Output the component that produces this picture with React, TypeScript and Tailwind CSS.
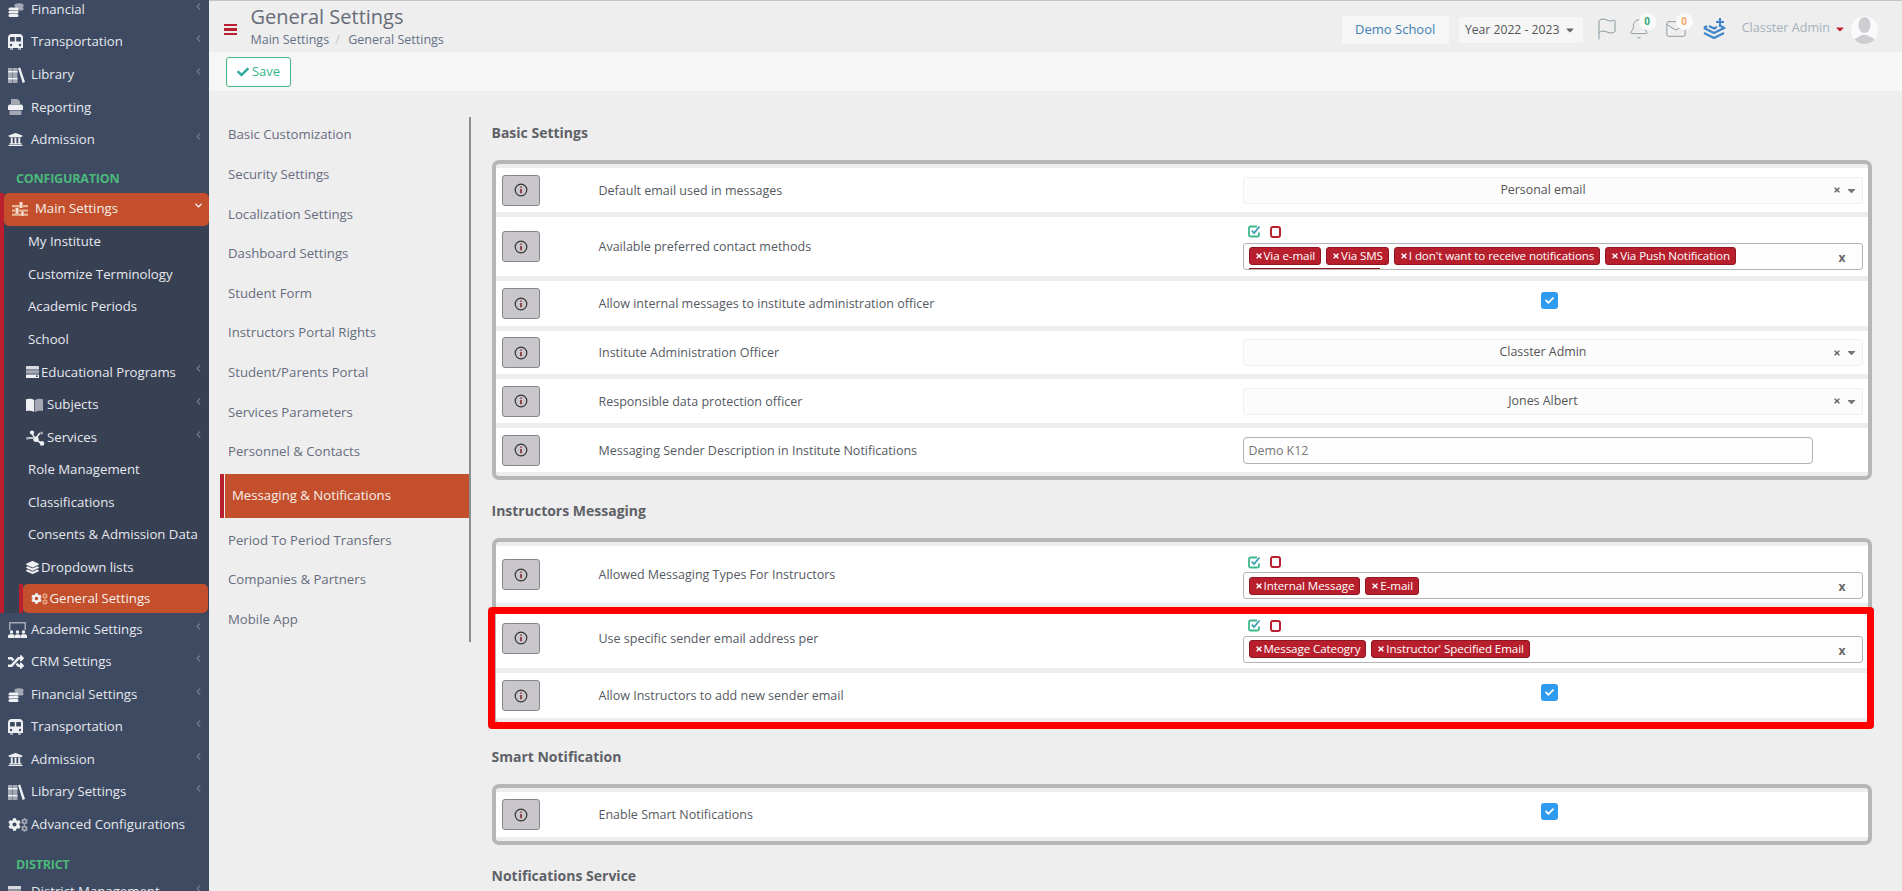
import React from "react";
import { ChevronLeft, ChevronDown, Flag, Bell, Mail } from "lucide-react";
import { FaCog, FaUniversity, FaLayerGroup, FaRandom, FaCaretDown, FaCheck, FaTimes } from "react-icons/fa";

const W = "#eef0f3";
const G = "#a3a8b4";

const Coins = () => (
  <svg width="16" height="14" viewBox="0 0 16 14">
    <ellipse cx="11" cy="2.4" rx="4.6" ry="2.2" fill={G} />
    <rect x="7" y="4" width="8.6" height="3.4" rx="1.6" fill={G} />
    <rect x="0.5" y="4.5" width="10" height="3" rx="1.5" fill={W} />
    <rect x="0.5" y="8" width="10" height="2.6" rx="1.3" fill={W} />
    <rect x="0.5" y="11" width="10" height="3" rx="1.5" fill={W} />
  </svg>
);
const Bus = () => (
  <svg width="15" height="16" viewBox="0 0 15 16">
    <rect x="2" y="13" width="3" height="3" fill={G} />
    <rect x="10" y="13" width="3" height="3" fill={G} />
    <path d="M4 0h7a4 4 0 0 1 4 4v10H0V4a4 4 0 0 1 4-4z" fill={W} />
    <rect x="2" y="3" width="4.8" height="4.4" rx="0.6" fill="#3d4a62" />
    <rect x="8.2" y="3" width="4.8" height="4.4" rx="0.6" fill="#3d4a62" />
    <circle cx="3" cy="11" r="1.2" fill="#3d4a62" />
    <circle cx="12" cy="11" r="1.2" fill="#3d4a62" />
  </svg>
);
const Books = () => (
  <svg width="17" height="16" viewBox="0 0 17 16">
    <rect x="0" y="1" width="4.5" height="15" fill={G} />
    <rect x="5" y="1" width="4.5" height="15" fill={G} />
    <rect x="0" y="4" width="9.5" height="1.4" fill={W} />
    <rect x="0" y="11" width="9.5" height="1.4" fill={W} />
    <path d="M10 1.2L12.2 0.4 17 15 14.6 16z" fill={W} />
  </svg>
);
const Printer = () => (
  <svg width="15" height="16" viewBox="0 0 15 16">
    <path d="M3 0h6.5L12 2.4V5H3z" fill={G} />
    <path d="M2 5.5h11a2 2 0 0 1 2 2V11H0V7.5a2 2 0 0 1 2-2z" fill={W} />
    <rect x="1.5" y="11.6" width="12" height="4.4" rx="1" fill={G} />
  </svg>
);
const Sliders = () => (
  <svg width="16" height="14" viewBox="0 0 16 14">
    <rect x="0" y="3" width="7" height="2.2" fill="#e7b695" />
    <rect x="11" y="3" width="5" height="2.2" fill="#e7b695" />
    <rect x="7.5" y="0" width="3" height="6" fill="#f5dfcf" />
    <rect x="0" y="7.5" width="3" height="2.2" fill="#e7b695" />
    <rect x="7" y="7.5" width="9" height="2.2" fill="#e7b695" />
    <rect x="3.5" y="5.8" width="3" height="6" fill="#f5dfcf" />
    <rect x="0" y="11.6" width="9" height="2.2" fill="#e7b695" />
    <rect x="12" y="11.6" width="4" height="2.2" fill="#e7b695" />
    <rect x="9.2" y="9.6" width="2.6" height="4.4" fill="#f5dfcf" />
  </svg>
);
const Server = () => (
  <svg width="13" height="12" viewBox="0 0 13 12">
    <rect x="0" y="0" width="13" height="3.4" rx="0.6" fill="#d8dae0" />
    <rect x="0" y="4.2" width="13" height="3.4" fill={G} />
    <rect x="0" y="8.4" width="13" height="3.6" rx="0.6" fill={W} />
    <rect x="10" y="9.4" width="1.6" height="1.6" fill="#384054" />
  </svg>
);
const Book = () => (
  <svg width="17" height="14" viewBox="0 0 17 14">
    <path d="M0 1.2C3 .3 6 .6 8.2 2v12C6 12.8 3 12.4 0 13z" fill={W} />
    <path d="M9 2c2.2-1.4 5-1.7 8-.8V13c-3-.6-5.8-.2-8 1z" fill={G} />
  </svg>
);
const Nodes = () => (
  <svg width="19" height="16" viewBox="0 0 19 16" fill="none">
    <path d="M2 8h5M6 3l3 6 6 4M9 9l5-6" stroke={W} strokeWidth="1.6" />
    <circle cx="6" cy="2.6" r="2.1" fill={W} />
    <circle cx="1.6" cy="8.2" r="1.5" fill={G} />
    <circle cx="10" cy="9.2" r="2.7" fill={W} />
    <circle cx="16" cy="13.4" r="2.3" fill={W} />
    <circle cx="15.6" cy="3" r="1.5" fill={G} />
  </svg>
);
const Academic = () => (
  <svg width="19" height="16" viewBox="0 0 19 16">
    <path d="M1 0h17v8h-1.5V1.5h-14V8H1z" fill={G} />
    <circle cx="3.5" cy="10" r="1.7" fill={W} />
    <circle cx="9.5" cy="10" r="1.7" fill={W} />
    <circle cx="15.5" cy="10" r="1.7" fill={W} />
    <path d="M0 16v-2c0-1 1-1.8 2-1.8h3c1 0 1.5.8 1.5 1.8v2zM6.8 16v-2c0-1 1-1.8 2-1.8h1.5c1 0 2 .8 2 1.8v2zM12.6 16v-2c0-1 .8-1.8 1.8-1.8H17c1 0 2 .8 2 1.8v2z" fill={W} />
  </svg>
);
const Cogs = ({ big = 13, small = 6, c = G }: { big?: number; small?: number; c?: string }) => (
  <span className="flex items-center">
    <FaCog size={big} color={W} />
    <span className="flex flex-col">
      <FaCog size={small} color={c} />
      <FaCog size={small} color={c} />
    </span>
  </span>
);
const Stack = ({ size = 13 }: { size?: number }) => <FaLayerGroup size={size} color={W} />;

const Chev = () => <ChevronLeft size={11} strokeWidth={2.5} className="ml-auto mr-[5px] mb-[7px] text-[#717c90] shrink-0" />;

function Item({ icon, label, chev = true }: { icon: React.ReactNode; label: string; chev?: boolean }) {
  return (
    <div className="flex items-center h-[32.55px] pl-[8px] text-[#e6e8ee]">
      <span className="w-[23px] flex justify-start shrink-0">{icon}</span>
      <span>{label}</span>
      {chev && <Chev />}
    </div>
  );
}

function Sub({ label, icon, w, chev }: { label: string; icon?: React.ReactNode; w?: string; chev?: boolean }) {
  return (
    <div className="flex items-center h-[32.6px] pl-[26px] text-[#e6e8ee]">
      {icon ? <span className={`${w} flex shrink-0`}>{icon}</span> : <span className="w-[2px]" />}
      <span>{label}</span>
      {chev && <Chev />}
    </div>
  );
}

function Sidebar() {
  return (
    <aside className="w-[209px] shrink-0 h-full overflow-hidden bg-[#3d4a62] text-[13.2px]">
      <div className="-mt-[6.5px]">
        <Item icon={<Coins />} label="Financial" />
        <Item icon={<Bus />} label="Transportation" />
        <Item icon={<Books />} label="Library" />
        <Item icon={<Printer />} label="Reporting" chev={false} />
        <Item icon={<FaUniversity size={15} color={W} />} label="Admission" />
        <div className="h-[36.5px] flex items-end pb-[6px] pl-[16px] text-[12.5px] leading-[16px] font-bold tracking-[-0.2px] text-[#4cb97b]">CONFIGURATION</div>
        <div className="border-l-4 border-[#b91f2e] bg-[#384054]">
          <div className="flex items-center h-[33px] pl-[8px] bg-[#c34f2d] rounded-[5px] text-[#f6efe9]">
            <span className="w-[23px] shrink-0"><Sliders /></span>
            <span>Main Settings</span>
            <ChevronDown size={11} strokeWidth={3} className="ml-auto mr-[5px] mb-[7px] text-white" />
          </div>
          <div className="-ml-[4px] pl-[4px]">
            <div className="-ml-[4px]">
              <Sub label="My Institute" />
              <Sub label="Customize Terminology" />
              <Sub label="Academic Periods" />
              <Sub label="School" />
              <Sub label="Educational Programs" icon={<Server />} w="w-[15px]" chev />
              <Sub label="Subjects" icon={<Book />} w="w-[21px]" chev />
              <Sub label="Services" icon={<Nodes />} w="w-[21px]" chev />
              <Sub label="Role Management" />
              <Sub label="Classifications" />
              <Sub label="Consents & Admission Data" />
              <Sub label="Dropdown lists" icon={<Stack />} w="w-[15px]" />
            </div>
            <div className="ml-[15px] border-l-4 border-[#b91f2e] h-[29px] mr-[1px]">
              <div className="h-full flex items-center pl-[8px] bg-[#c34f2d] rounded-[5px] text-[#f6efe9]">
                <span className="w-[18.5px] shrink-0"><Cogs big={11} small={6} c="#e7a67f" /></span>
                <span>General Settings</span>
              </div>
            </div>
          </div>
        </div>
        <Item icon={<Academic />} label="Academic Settings" />
        <Item icon={<FaRandom size={16} color={W} />} label="CRM Settings" />
        <Item icon={<Coins />} label="Financial Settings" />
        <Item icon={<Bus />} label="Transportation" />
        <Item icon={<FaUniversity size={15} color={W} />} label="Admission" />
        <Item icon={<Books />} label="Library Settings" />
        <Item icon={<Cogs big={13} small={7} />} label="Advanced Configurations" chev={false} />
        <div className="h-[33px] flex items-end pb-[1px] pl-[16px] text-[12.5px] leading-[16px] font-bold tracking-[-0.2px] text-[#4cb97b]">DISTRICT</div>
        <div className="mt-[2px]">
          <Item icon={<Server />} label="District Management" />
        </div>
      </div>
    </aside>
  );
}

function Header() {
  return (
    <header className="h-[52px] shrink-0 flex items-center bg-[#eeeeee] border-t border-[#c4c4c4]">
      <div className="ml-[15px] w-[12.5px] h-[11.5px] mt-[6px] flex flex-col justify-between">
        <i className="block h-[2.5px] bg-[#b91f2e]" />
        <i className="block h-[2.5px] bg-[#b91f2e]" />
        <i className="block h-[2.5px] bg-[#b91f2e]" />
      </div>
      <div className="ml-[14px] self-start">
        <div className="text-[20px] leading-[24px] mt-[4px] text-[#676c78]">General Settings</div>
        <div className="text-[12.5px] leading-[16px] mt-[3px] text-[#667087]">
          Main Settings <span className="text-[#c9c9c9] mx-[3px]">/</span> <span className="ml-[2px]">General Settings</span>
        </div>
      </div>
      <div className="ml-auto mt-[7px] flex items-center">
        <div className="w-[107px] h-[28px] flex items-center justify-center bg-[#f6f6f6] text-[13px] text-[#3f7fb5]">Demo School</div>
        <div className="ml-[10px] w-[124px] h-[26px] flex items-center justify-center gap-[5px] bg-[#f6f6f6] text-[12.2px] text-[#555]">
          Year 2022 - 2023 <FaCaretDown size={12} className="text-[#666]" />
        </div>
        <Flag size={24} strokeWidth={1} className="ml-[12px] mb-[3px] text-[#8a98a0]" />
        <div className="relative ml-[9px] mb-[3px]">
          <Bell size={22} strokeWidth={1} className="text-[#8a98a0]" />
          <span className="absolute -top-[5px] left-[11px] w-[17px] h-[17px] rounded-full bg-[#fafafa] text-[10px] font-bold text-[#35a77c] flex items-center justify-center">0</span>
        </div>
        <div className="relative ml-[15px] mb-[3px]">
          <Mail size={22} strokeWidth={1} className="text-[#8a98a0]" />
          <span className="absolute -top-[5px] left-[11px] w-[17px] h-[17px] rounded-full bg-[#fafafa] text-[10px] font-bold text-[#f0a868] flex items-center justify-center">0</span>
        </div>
        <svg width="23" height="24" viewBox="0 0 23 24" fill="none" stroke="#3f86cb" strokeWidth="2.2" className="ml-[16px] mb-[3px]">
          <path d="M1 11l10 5 10-5-3-2M1 16l10 5 10-5M6 9l5 2.5 3-1.5" />
          <path d="M1 11l3-2M17 1v9M13 5h8" />
        </svg>
        <span className="ml-[16px] mb-[4px] text-[12.6px] text-[#a6b2bd]">Classter Admin</span>
        <FaCaretDown size={12} className="ml-[4px] mb-[3px] text-[#c0202e]" />
        <div className="ml-[5px] mr-[24px] w-[27px] h-[28px] rounded-full bg-[#fafafa] overflow-hidden flex justify-center">
          <svg width="23" height="28" viewBox="0 0 23 28" fill="#cfcdd2"><ellipse cx="11.5" cy="9" rx="6" ry="8" /><path d="M0 28c0-6 6-7 9-9h5c3 2 9 3 9 9z" /></svg>
        </div>
      </div>
    </header>
  );
}

const navTop = ["Basic Customization", "Security Settings", "Localization Settings", "Dashboard Settings", "Student Form", "Instructors Portal Rights", "Student/Parents Portal", "Services Parameters", "Personnel & Contacts"];
const navBottom = ["Period To Period Transfers", "Companies & Partners", "Mobile App"];

function SettingsNav() {
  return (
    <nav className="ml-[11px] mt-[26px] w-[251px] h-[525px] shrink-0 border-r-[2.5px] border-[#8b8c92] text-[13.2px] text-[#676d7e]">
      <div className="-mt-[1.5px]">
        {navTop.map((n) => <div key={n} className="h-[39.6px] flex items-center pl-[8px]">{n}</div>)}
        <div className="mt-[2px] mb-[3px] h-[44px] flex">
          <div className="w-[4px] bg-[#b91f2e]" />
          <div className="ml-[1px] flex-1 flex items-center pl-[7px] bg-[#c34f2d] text-[#f6efe9]">Messaging &amp; Notifications</div>
        </div>
        {navBottom.map((n) => <div key={n} className="h-[39.6px] flex items-center pl-[8px]">{n}</div>)}
      </div>
    </nav>
  );
}

function Info() {
  return (
    <div className="w-[38px] h-[31px] shrink-0 rounded-[3px] border border-[#85858a] bg-[#c9c7cb] flex items-center justify-center">
      <svg width="14" height="14" viewBox="0 0 14 14" fill="none" stroke="#333" strokeWidth="1.2">
        <circle cx="7" cy="7" r="5.8" />
        <path d="M7 6v4.2M7 3.4v1.3" stroke="#7a1c22" strokeWidth="1.5" />
      </svg>
    </div>
  );
}

function Row({ h, label, children, mb }: { h: string; label: string; children?: React.ReactNode; mb?: boolean }) {
  return (
    <div className={`${h} ${mb ? "mb-[5px]" : ""} bg-white flex items-center pl-[6px]`}>
      <Info />
      <div className="ml-[59px] w-[644px] shrink-0 pt-[2px] text-[12.5px] text-[#555a62]">{label}</div>
      <div className="w-[620px] shrink-0 self-stretch flex flex-col justify-center">{children}</div>
    </div>
  );
}

function SingleSelect({ value }: { value: string }) {
  return (
    <div className="h-[27px] rounded-[3px] border border-[#efefef] bg-[#fcfcfc] flex items-center text-[12.4px] text-[#555]">
      <span className="flex-1 text-center pl-[10px]">{value}</span>
      <FaTimes size={8} className="text-[#666]" />
      <FaCaretDown size={13} className="ml-[4px] mr-[4px] text-[#777]" />
    </div>
  );
}

function Tag({ label }: { label: string }) {
  return (
    <span className="h-[18px] px-[5px] flex items-center gap-[1px] rounded-[3px] border border-[#8f1722] bg-[#b71f2d] text-white text-[11.6px] tracking-[-0.1px] whitespace-nowrap">
      <FaTimes size={8} className="shrink-0" /><span>{label}</span>
    </span>
  );
}

function Multi({ tags, underline, instr }: { tags: string[]; underline?: boolean; instr?: boolean }) {
  return (
    <div className={instr ? "mt-[6px]" : "mt-[2px]"}>
      <div className={`flex items-center gap-[8px] pl-[5px] h-[12px] ${instr ? "mb-[4px]" : "mb-[5px]"}`}>
        <svg width="13" height="13" viewBox="0 0 13 13" fill="none">
          <path d="M11 7.5V10a1.5 1.5 0 0 1-1.5 1.5h-7A1.5 1.5 0 0 1 1 10V3a1.5 1.5 0 0 1 1.5-1.5H9" stroke="#3db98b" strokeWidth="1.8" />
          <path d="M3.8 5.5L6 8l5.5-6.5" stroke="#3b9fb0" strokeWidth="1.8" />
        </svg>
        <span className="ml-[1px] w-[11px] h-[12px] rounded-[3px] border-2 border-[#b91f2e]" />
      </div>
      <div className="relative h-[27px] rounded-[3px] border border-[#b4b4b4] bg-[#fdfdfd] flex items-center gap-[5px] pl-[5px]">
        {tags.map((t) => <Tag key={t} label={t} />)}
        <span className="absolute right-[16px] top-[5px] text-[12px] font-bold text-[#666]">x</span>
        {underline && <i className="absolute left-[5px] bottom-0 w-[131px] h-[1px] bg-[#8f1722]" />}
      </div>
    </div>
  );
}

function CheckBox() {
  return (
    <div className="w-[17px] h-[17px] mx-auto -translate-x-[3px] -translate-y-[3px] rounded-[3px] bg-[#2f9bef] flex items-center justify-center">
      <FaCheck size={9} className="text-white" />
    </div>
  );
}

function Heading({ children }: { children: string }) {
  return <h2 className="mt-[21px] mb-[17px] h-[20px] leading-[20px] text-[14px] font-bold text-[#5e6168]">{children}</h2>;
}

function Panel({ children, red }: { children: React.ReactNode; red?: boolean }) {
  return (
    <section className="relative border-4 border-[#b6b6b6] rounded-[7px] py-[4px] bg-[#eeeeee]">
      {children}
      {red && <div className="absolute left-[-7.5px] top-[65px] w-[1386px] h-[122px] border-[7px] border-[#ff0000] rounded-[4px]" />}
    </section>
  );
}

function Content() {
  return (
    <div className="ml-[20.5px] w-[1380.5px] pt-[11px] text-[13px]">
      <Heading>Basic Settings</Heading>
      <Panel>
        <Row h="h-[44px]" label="Default email used in messages" mb><SingleSelect value="Personal email" /></Row>
        <Row h="h-[59px]" label="Available preferred contact methods" mb>
          <Multi underline tags={["Via e-mail", "Via SMS", "I don't want to receive notifications", "Via Push Notification"]} />
        </Row>
        <Row h="h-[45px]" label="Allow internal messages to institute administration officer" mb><CheckBox /></Row>
        <Row h="h-[43px]" label="Institute Administration Officer" mb><SingleSelect value="Classter Admin" /></Row>
        <Row h="h-[44px]" label="Responsible data protection officer" mb><SingleSelect value="Jones Albert" /></Row>
        <Row h="h-[44px]" label="Messaging Sender Description in Institute Notifications">
          <input readOnly placeholder="Demo K12" className="w-[570px] h-[27px] rounded-[4px] border border-[#b4b4b4] bg-[#fdfdfd] px-[5px] text-[12.4px] placeholder:text-[#777]" />
        </Row>
      </Panel>
      <Heading>Instructors Messaging</Heading>
      <Panel red>
        <Row h="h-[57px]" label="Allowed Messaging Types For Instructors" mb><Multi instr tags={["Internal Message", "E-mail"]} /></Row>
        <Row h="h-[60px]" label="Use specific sender email address per" mb><Multi instr tags={["Message Cateogry", "Instructor' Specified Email"]} /></Row>
        <Row h="h-[45px]" label="Allow Instructors to add new sender email"><CheckBox /></Row>
      </Panel>
      <Heading>Smart Notification</Heading>
      <Panel>
        <Row h="h-[45px]" label="Enable Smart Notifications"><CheckBox /></Row>
      </Panel>
      <Heading>Notifications Service</Heading>
    </div>
  );
}

export default function App() {
  return (
    <div className="w-[1902px] h-[891px] flex overflow-hidden bg-[#eeeeee] font-['Open_Sans',sans-serif]">
      <Sidebar />
      <div className="flex-1 min-w-0 flex flex-col">
        <Header />
        <div className="h-[39px] shrink-0 bg-[#f6f6f6] flex items-center pl-[17px]">
          <button className="w-[65px] h-[30px] rounded-[3px] border border-[#41b883] bg-white flex items-center justify-center gap-[3px] text-[13px] text-[#37b58a]">
            <FaCheck size={12} className="text-[#2fa8a0]" /> Save
          </button>
        </div>
        <div className="flex flex-1 min-h-0 overflow-hidden">
          <SettingsNav />
          <Content />
        </div>
      </div>
    </div>
  );
}
